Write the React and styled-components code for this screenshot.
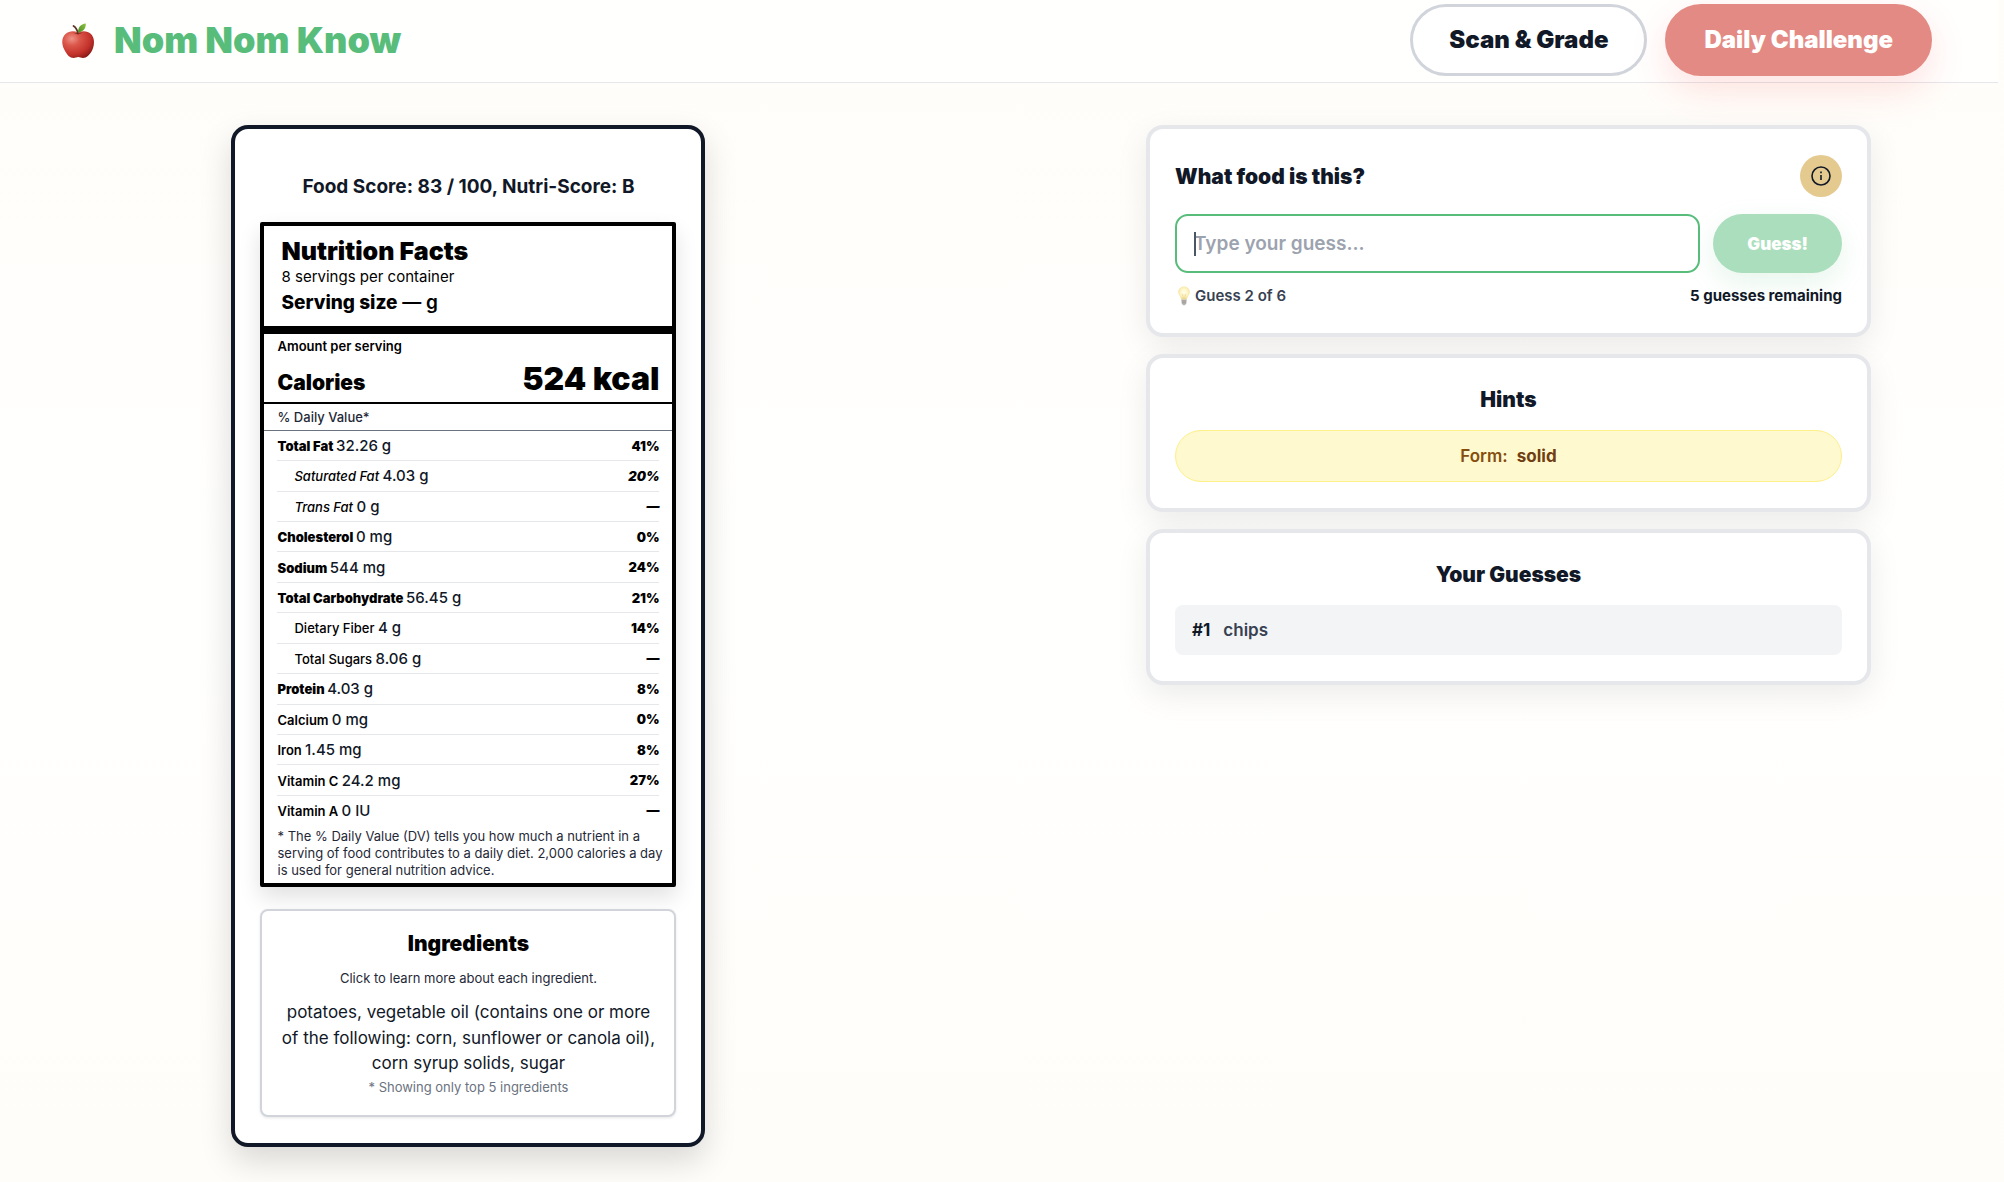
import React from "react";
import styled, { createGlobalStyle } from "styled-components";

const GlobalStyle = createGlobalStyle`
	* {
		box-sizing:border-box;
	}
	body {
		margin:0;
		background:linear-gradient(180deg, #fffdf9 0%, #fffffe 50%, #fffdf9 100%);
		font-family:Inter, "Liberation Sans", sans-serif;
		color:#111827;
	}
	h1, h2, p, ul {
		margin:0;
		padding:0;
	}
	button, input {
		font-family:inherit;
	}
`;

const Page = styled.div`
	min-height:100vh;
	padding-right:6px;
`;

const Header = styled.header`
	display:flex;
	align-items:center;
	justify-content:space-between;
	height:83px;
	padding:0 66px 2px 60px;
	background-color:#fffffe;
	border-bottom:1px solid #e5e7eb;
`;

const Brand = styled.div`
	display:flex;
	align-items:center;
	gap:17px;
`;

const BrandName = styled.h1`
	font-size:36px;
	line-height:44px;
	font-weight:900;
	color:#58bd7b;
`;

const Nav = styled.nav`
	display:flex;
	gap:18px;
`;

const NavButton = styled.button`
	height:72px;
	padding:0 36px 2px;
	border:3px solid ${({ $primary }) => ($primary ? "#e48a84" : "#d1d5db")};
	border-radius:36px;
	background-color:${({ $primary }) => ($primary ? "#e48a84" : "#fff")};
	box-shadow:${({ $primary }) => ($primary ? "0 14px 36px rgba(239, 68, 68, 0.15)" : "none")};
	color:${({ $primary }) => ($primary ? "#fff" : "#111827")};
	font-size:24px;
	font-weight:900;
`;

const Main = styled.main`
	display:grid;
	grid-template-columns:20fr 21fr;
	gap:178px;
	align-items:start;
	justify-items:center;
	padding:42px 48px 36px;
`;

const FoodCard = styled.section`
	width:100%;
	max-width:474px;
	padding:26px 25px;
	border:4px solid #111827;
	border-radius:17px;
	background-color:#fff;
	box-shadow:0 14px 32px rgba(0, 0, 0, 0.15);
`;

const Score = styled.p`
	padding:18px 0 22px;
	font-size:19px;
	line-height:27px;
	font-weight:700;
	text-align:center;
`;

const Label = styled.section`
	border:4px solid #000;
	border-radius:2px;
	background-color:#fff;
	box-shadow:0 10px 22px rgba(0, 0, 0, 0.12);
	color:#000;
`;

const LabelHead = styled.div`
	height:108px;
	padding:10px 17px 0;
	border-bottom:8px solid #000;
`;

const LabelTitle = styled.h2`
	font-size:25px;
	line-height:30px;
	font-weight:900;
`;

const Servings = styled.p`
	font-size:15px;
	line-height:22px;
`;

const ServingSize = styled.p`
	font-size:19px;
	line-height:30px;
	font-weight:600;

	b {
		font-weight:800;
	}
`;

const Calories = styled.div`
	padding:3px 13px 0;
	border-bottom:2px solid #000;
`;

const Amount = styled.p`
	font-size:13px;
	line-height:18px;
	font-weight:600;
`;

const CaloriesRow = styled.div`
	display:flex;
	align-items:baseline;
	justify-content:space-between;
	height:47px;
	font-size:21px;
	line-height:48px;
	font-weight:900;

	strong {
		font-size:32px;
		font-weight:900;
	}
`;

const DailyValue = styled.p`
	padding:0 13px;
	border-bottom:1px solid #6b7280;
	color:#1f2937;
	font-size:13px;
	line-height:26px;
	font-weight:500;
`;

const TableWrap = styled.div`
	padding:0 13px;
`;

const Table = styled.table`
	width:100%;
	height:394px;
	border-collapse:collapse;
`;

const Row = styled.tr`
	border-bottom:1px solid #e5e7eb;
	font-style:${({ $italic }) => ($italic ? "italic" : "normal")};

	&:last-child {
		border-bottom:0;
	}
`;

const Name = styled.th`
	padding:0 0 0 ${({ $indent }) => ($indent ? 17 : 0)}px;
	font-size:13px;
	font-weight:${({ $bold, $indent }) => ($bold ? 900 : $indent ? 500 : 600)};
	text-align:left;

	span {
		color:#111827;
		font-size:15px;
		font-style:normal;
		font-weight:500;
	}
`;

const Percent = styled.td`
	padding:0;
	font-size:13px;
	font-weight:900;
	text-align:right;
`;

const Footnote = styled.p`
	padding:3px 4px 4px 13px;
	color:#1f2937;
	font-size:13px;
	line-height:17px;
`;

const Ingredients = styled.section`
	margin-top:22px;
	padding:18px 16px;
	border:2px solid #d1d5db;
	border-radius:8px;
	background-color:#fff;
	box-shadow:0 1px 3px rgba(0, 0, 0, 0.1);
	text-align:center;
`;

const IngredientsTitle = styled.h2`
	color:#000;
	font-size:21px;
	line-height:30px;
	font-weight:900;
`;

const SmallText = styled.p`
	margin-top:${({ $top }) => $top || 0}px;
	color:${({ $muted }) => ($muted ? "#6b7280" : "#1f2937")};
	font-size:13px;
	line-height:20px;
`;

const IngredientList = styled.p`
	margin-top:12px;
	font-size:17px;
	line-height:1.5;
`;

const Side = styled.div`
	display:flex;
	flex-direction:column;
	gap:17px;
	width:100%;
	max-width:725px;
`;

const Card = styled.section`
	padding:26px 25px;
	border:4px solid #e5e7eb;
	border-radius:17px;
	background-color:#fff;
	box-shadow:0 10px 32px rgba(0, 0, 0, 0.08);
`;

const CardTitle = styled.h2`
	margin-bottom:${({ $inline }) => ($inline ? 0 : 16)}px;
	padding-top:2px;
	font-size:21px;
	line-height:28px;
	font-weight:900;
	text-align:center;
`;

const CardHead = styled.div`
	display:flex;
	align-items:center;
	justify-content:space-between;
`;

const InfoButton = styled.button`
	display:flex;
	align-items:center;
	justify-content:center;
	width:42px;
	height:42px;
	padding:0;
	border:0;
	border-radius:50%;
	background-color:#e5ca90;
	color:#111827;
`;

const GuessForm = styled.form`
	display:flex;
	gap:13px;
	margin-top:17px;
`;

const Field = styled.label`
	position:relative;
	flex:1;
`;

const GuessInput = styled.input`
	display:block;
	width:100%;
	height:59px;
	padding:0 17px;
	border:2px solid #58bd7b;
	border-radius:13px;
	outline:0;
	background-color:#fff;
	font-size:19px;
	font-weight:600;

	&::placeholder {
		color:#9ca3af;
		opacity:1;
	}
`;

const Caret = styled.span`
	position:absolute;
	top:18px;
	left:19px;
	width:2px;
	height:24px;
	background-color:#4b5563;
`;

const GuessButton = styled.button`
	height:59px;
	padding:0 34px;
	border:0;
	border-radius:30px;
	background-color:#abdebd;
	box-shadow:0 10px 28px rgba(88, 189, 123, 0.14);
	color:#fff;
	font-size:17px;
	font-weight:900;
`;

const Status = styled.div`
	display:flex;
	align-items:center;
	justify-content:space-between;
	margin-top:12px;
	color:#374151;
	font-size:15px;
	line-height:22px;
	font-weight:600;

	span {
		display:flex;
		align-items:center;
		gap:3px;
	}

	strong {
		color:#111827;
		font-weight:700;
	}
`;

const Hint = styled.p`
	display:flex;
	align-items:center;
	justify-content:center;
	gap:9px;
	height:52px;
	border:1px solid #fef08a;
	border-radius:26px;
	background-color:#fff9cf;
	color:#854d0e;
	font-size:17px;
	font-weight:600;

	strong {
		color:#713f12;
		font-weight:700;
	}
`;

const Guess = styled.li`
	display:flex;
	align-items:center;
	gap:13px;
	height:50px;
	padding:0 17px;
	border-radius:8px;
	background-color:#f3f4f6;
	color:#374151;
	font-size:17px;
	font-weight:600;
	list-style:none;

	strong {
		color:#111827;
		font-weight:700;
	}
`;

const Apple = () => (
	<svg width="37" height="37" viewBox="0 0 37 37" aria-hidden="true">
		<defs>
			<radialGradient id="skin" cx="0.3" cy="0.28" r="0.85">
				<stop offset="0" stopColor="#ee9488" />
				<stop offset="0.3" stopColor="#dc574b" />
				<stop offset="0.7" stopColor="#c2312a" />
				<stop offset="1" stopColor="#7c1715" />
			</radialGradient>
			<linearGradient id="leaf" x1="0" y1="1" x2="1" y2="0">
				<stop offset="0" stopColor="#4c8a22" />
				<stop offset="1" stopColor="#8cc541" />
			</linearGradient>
		</defs>
		<path d="M18 10.500C14 8.500 9 9 5.500 12C1.500 15.500 1.300 22 4.500 28C7 33 10 36 13.500 36C15.500 36 16.500 35 18.200 35C20 35 21 36 23 36C26.500 36 30 32.500 32.300 28C35 22 34.500 15.500 31 12C27.500 8.800 22.500 8.500 18 10.500Z" fill="url(#skin)" />
		<path d="M13 10.500Q18 14 23 10.300Q18 11.800 13 10.500Z" fill="#7c2117" opacity="0.7" />
		<path d="M18 11.500C17.300 8 16 5.500 13.500 4" fill="none" stroke="#5b3427" strokeWidth="1.800" strokeLinecap="round" />
		<path d="M18 10.500C18 5.500 20.500 2 25.800 1.500C26 6.500 23 10 18 10.500Z" fill="url(#leaf)" />
	</svg>
);

const Bulb = () => (
	<svg width="17" height="20" viewBox="0 0 17 20" aria-hidden="true">
		<defs>
			<radialGradient id="glass" cx="0.5" cy="0.45" r="0.6">
				<stop offset="0" stopColor="#fffef0" />
				<stop offset="0.6" stopColor="#fdf3bd" />
				<stop offset="1" stopColor="#ecd183" />
			</radialGradient>
		</defs>
		<path d="M9 0.500C5.700 0.500 3.300 3 3.300 6C3.300 9 5.800 10.500 6.300 13.500H11.700C12.200 10.500 14.700 9 14.700 6C14.700 3 12.300 0.500 9 0.500Z" fill="url(#glass)" />
		<path d="M7.600 8L8.300 13M10.400 8L9.700 13" fill="none" stroke="#e6c873" strokeWidth="0.600" />
		<path d="M6.400 13.500H11.600L11.200 17.500L10 19.300H8L6.800 17.500Z" fill="#b9b6b2" />
		<path d="M6.600 15H11.400M6.800 16.800H11.200" stroke="#8b8884" strokeWidth="0.600" />
	</svg>
);

const InfoIcon = () => (
	<svg width="20" height="20" viewBox="0 0 20 20" fill="none" stroke="currentColor" strokeWidth="1.600" aria-hidden="true">
		<circle cx="10" cy="10" r="9" />
		<path d="M10 9V14M10 5.500V7.200" />
	</svg>
);

const nutrients = [
	{ name: "Total Fat", value: "32.26 g", percent: "41%", bold: true },
	{ name: "Saturated Fat", value: "4.03 g", percent: "20%", indent: true, italic: true },
	{ name: "Trans Fat", value: "0 g", percent: "—", indent: true, italic: true },
	{ name: "Cholesterol", value: "0 mg", percent: "0%", bold: true },
	{ name: "Sodium", value: "544 mg", percent: "24%", bold: true },
	{ name: "Total Carbohydrate", value: "56.45 g", percent: "21%", bold: true },
	{ name: "Dietary Fiber", value: "4 g", percent: "14%", indent: true },
	{ name: "Total Sugars", value: "8.06 g", percent: "—", indent: true },
	{ name: "Protein", value: "4.03 g", percent: "8%", bold: true },
	{ name: "Calcium", value: "0 mg", percent: "0%" },
	{ name: "Iron", value: "1.45 mg", percent: "8%" },
	{ name: "Vitamin C", value: "24.2 mg", percent: "27%" },
	{ name: "Vitamin A", value: "0 IU", percent: "—" },
];

const NutritionLabel = () => (
	<Label>
		<LabelHead>
			<LabelTitle>Nutrition Facts</LabelTitle>
			<Servings>8 servings per container</Servings>
			<ServingSize><b>Serving size</b> — g</ServingSize>
		</LabelHead>
		<Calories>
			<Amount>Amount per serving</Amount>
			<CaloriesRow>
				<span>Calories</span>
				<strong>524 kcal</strong>
			</CaloriesRow>
		</Calories>
		<DailyValue>% Daily Value*</DailyValue>
		<TableWrap>
			<Table>
				<tbody>
					{nutrients.map(({ name, value, percent, bold, indent, italic }) => (
						<Row key={name} $italic={italic}>
							<Name scope="row" $bold={bold} $indent={indent}>
								{name} <span>{value}</span>
							</Name>
							<Percent>{percent}</Percent>
						</Row>
					))}
				</tbody>
			</Table>
		</TableWrap>
		<Footnote>
			* The % Daily Value (DV) tells you how much a nutrient in a serving of food contributes to a daily diet. 2,000 calories a day is used for general nutrition advice.
		</Footnote>
	</Label>
);

const App = () => (
	<Page>
		<GlobalStyle />
		<Header>
			<Brand>
				<Apple />
				<BrandName>Nom Nom Know</BrandName>
			</Brand>
			<Nav>
				<NavButton type="button">Scan &amp; Grade</NavButton>
				<NavButton type="button" $primary>Daily Challenge</NavButton>
			</Nav>
		</Header>
		<Main>
			<FoodCard>
				<Score>Food Score: 83 / 100, Nutri-Score: B</Score>
				<NutritionLabel />
				<Ingredients>
					<IngredientsTitle>Ingredients</IngredientsTitle>
					<SmallText $top={9}>Click to learn more about each ingredient.</SmallText>
					<IngredientList>
						potatoes, vegetable oil (contains one or more of the following: corn, sunflower or canola oil), corn syrup solids, sugar
					</IngredientList>
					<SmallText $muted>* Showing only top 5 ingredients</SmallText>
				</Ingredients>
			</FoodCard>
			<Side>
				<Card>
					<CardHead>
						<CardTitle $inline>What food is this?</CardTitle>
						<InfoButton type="button" aria-label="How to play">
							<InfoIcon />
						</InfoButton>
					</CardHead>
					<GuessForm onSubmit={(e) => e.preventDefault()}>
						<Field>
							<GuessInput type="text" placeholder="Type your guess..." aria-label="Your guess" />
							<Caret />
						</Field>
						<GuessButton type="submit">Guess!</GuessButton>
					</GuessForm>
					<Status>
						<span><Bulb />Guess 2 of 6</span>
						<strong>5 guesses remaining</strong>
					</Status>
				</Card>
				<Card>
					<CardTitle>Hints</CardTitle>
					<Hint>Form: <strong>solid</strong></Hint>
				</Card>
				<Card>
					<CardTitle>Your Guesses</CardTitle>
					<ul>
						<Guess><strong>#1</strong>chips</Guess>
					</ul>
				</Card>
			</Side>
		</Main>
	</Page>
);

export default App;
